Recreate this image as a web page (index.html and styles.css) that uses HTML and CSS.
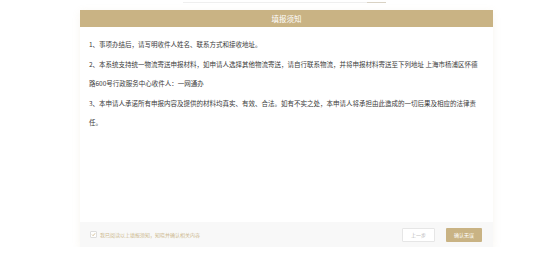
FILE: index.html
```html
<!DOCTYPE html>
<html lang="zh-CN">
<head>
    <meta charset="UTF-8">
    <meta name="viewport" content="width=device-width, initial-scale=1.0">
    <title>填报须知</title>
    <link rel="stylesheet" href="styles.css">
</head>
<body>
    <div class="topbar">
        <div class="track"><span class="track-done"></span></div>
    </div>
    <div class="card">
        <div class="card-head">填报须知</div>
        <div class="card-body">
            <p>1、事项办结后，请写明收件人姓名、联系方式和接收地址。</p>
            <p>2、本系统支持统一物流寄送申报材料，如申请人选择其他物流寄送，请自行联系物流，并将申报材料寄送至下列地址 上海市杨浦区怀德路600号行政服务中心收件人：一网通办</p>
            <p>3、本申请人承诺所有申报内容及提供的材料均真实、有效、合法。如有不实之处，本申请人将承担由此造成的一切后果及相应的法律责任。</p>
        </div>
        <!-- footer -->
        <div class="card-foot">
            <label class="agree">
                <span class="check">
                    <svg width="5" height="5" viewBox="0 0 10 10"><path d="M2 5.2 L4.2 7.4 L8.2 2.6" fill="none" stroke="#c9b384" stroke-width="1.6"/></svg>
                </span>
                我已阅读以上填报须知，知晓并确认相关内容
            </label>
            <div class="actions">
                <button class="btn btn-prev">上一步</button>
                <button class="btn btn-next">确认无误</button>
            </div>
        </div>
    </div>
</body>
</html>
```

FILE: styles.css
```css
body {
    margin: 0;
    padding: 0;
    background: #fff;
    font-family: "Noto Sans CJK SC", "Noto Sans", sans-serif;
    color: #333;
}
.topbar {
    height: 10px;
    padding-top: 2px;
    box-sizing: border-box;
}
.track {
    margin-left: 183px;
    width: 203px;
    height: 1px;
    background: #efefef;
    display: flex;
    justify-content: flex-end;
}
.track-done {
    width: 19px;
    height: 1px;
    background: #d9d2c4;
}
.card {
    margin-left: 80px;
    width: 413px;
    background: #fff;
    box-shadow: 0 2px 8px rgba(200, 170, 120, 0.12);
}
.card-head {
    height: 17px;
    line-height: 17px;
    background: #c9b384;
    color: #fff;
    text-align: center;
    font-size: 7.5px;
}
.card-body {
    height: 195px;
    box-sizing: border-box;
    padding: 8px 10px 0 9px;
}
.card-body p {
    margin: 0;
    font-size: 6.5px;
    line-height: 19.5px;
    color: #3a3a3a;
}
.card-foot {
    height: 25px;
    background: #f8f8f8;
    display: flex;
    align-items: center;
    justify-content: space-between;
    padding: 0 11px 0 10px;
}
.agree {
    display: flex;
    align-items: center;
    gap: 3px;
    font-size: 5px;
    color: #cdb98f;
}
.check {
    width: 5px;
    height: 5px;
    border: 1px solid #ddd;
    border-radius: 1px;
    background: #fff;
    display: flex;
    align-items: center;
    justify-content: center;
}
.actions {
    display: flex;
    gap: 11px;
}
.btn {
    height: 14px;
    padding: 0;
    border-radius: 1px;
    font-family: inherit;
    font-size: 5px;
    cursor: pointer;
}
.btn-prev {
    width: 33px;
    background: #fff;
    border: 1px solid #e6e6e6;
    color: #b5b5b5;
}
.btn-next {
    width: 36px;
    background: #c9b384;
    border: none;
    color: #fff;
}
```
